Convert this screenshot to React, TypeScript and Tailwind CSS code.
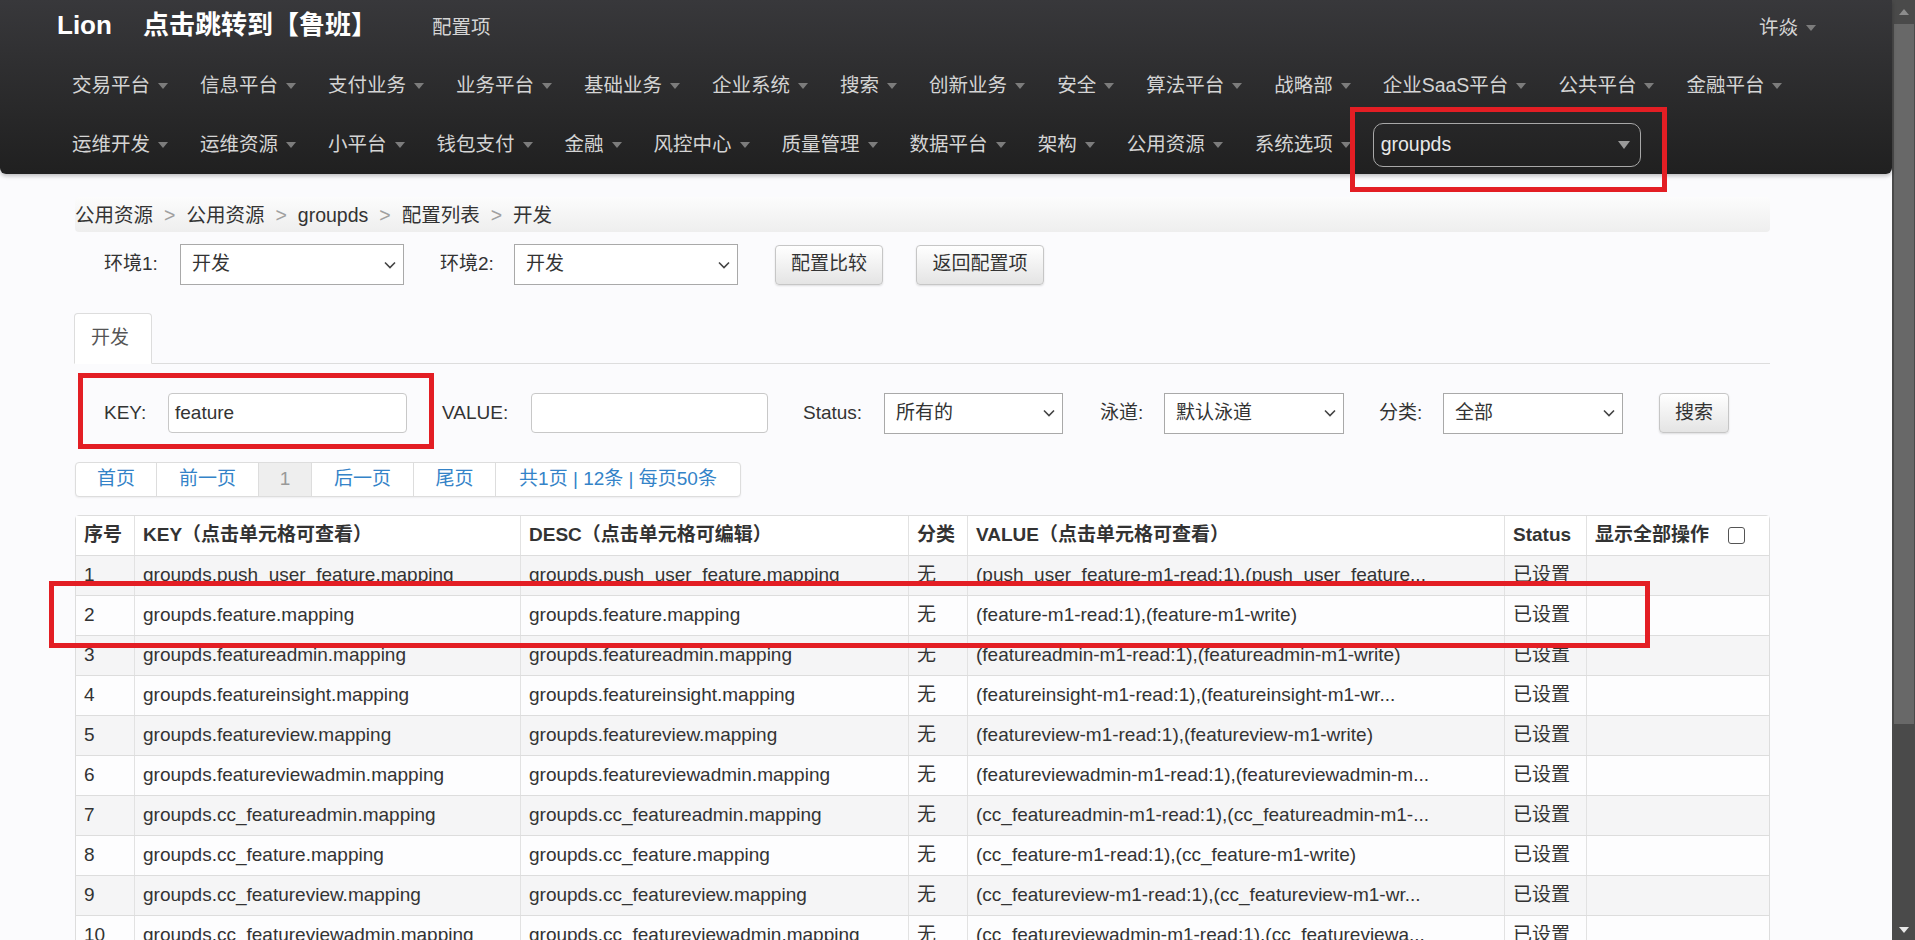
import React from "react";

const FONT = "font-['Liberation_Sans','Noto_Sans_CJK_SC',sans-serif]";

function NavCaret() {
  return (
    <span className="ml-[8px] inline-block h-0 w-0 border-l-[5px] border-r-[5px] border-t-[6px] border-l-transparent border-r-transparent border-t-[#7c7c7c]" />
  );
}

function NavItem({ label }: { label: string }) {
  return (
    <div className="flex items-center whitespace-nowrap px-[16px] text-[19.5px] text-[#d4d4d4]">
      {label}
      <NavCaret />
    </div>
  );
}

function Chevron() {
  return (
    <svg width="12" height="8" viewBox="0 0 12 8" className="shrink-0">
      <polyline points="1,1.5 6,6.5 11,1.5" fill="none" stroke="#444" strokeWidth="1.6" />
    </svg>
  );
}

function FakeSelect({ value, w }: { value: string; w: string }) {
  return (
    <div className={`flex h-[41px] items-center justify-between border border-[#a9a9a9] bg-white pl-[11px] pr-[7px] text-[19px] text-[#333] ${w}`}>
      <span>{value}</span>
      <Chevron />
    </div>
  );
}

function Btn({ label, w }: { label: string; w: string }) {
  return (
    <div className={`flex h-[40px] items-center justify-center rounded-[4px] border border-[#c6c6c6] bg-gradient-to-b from-white to-[#e4e4e4] text-[19px] text-[#333] shadow-[0_1px_2px_rgba(0,0,0,0.12)] ${w}`}>
      {label}
    </div>
  );
}

const row2 = ["交易平台", "信息平台", "支付业务", "业务平台", "基础业务", "企业系统", "搜索", "创新业务", "安全", "算法平台", "战略部", "企业SaaS平台", "公共平台", "金融平台"];
const row3 = ["运维开发", "运维资源", "小平台", "钱包支付", "金融", "风控中心", "质量管理", "数据平台", "架构", "公用资源", "系统选项"];

const rows: [string, string, string][] = [
  ["1", "groupds.push_user_feature.mapping", "(push_user_feature-m1-read:1),(push_user_feature..."],
  ["2", "groupds.feature.mapping", "(feature-m1-read:1),(feature-m1-write)"],
  ["3", "groupds.featureadmin.mapping", "(featureadmin-m1-read:1),(featureadmin-m1-write)"],
  ["4", "groupds.featureinsight.mapping", "(featureinsight-m1-read:1),(featureinsight-m1-wr..."],
  ["5", "groupds.featureview.mapping", "(featureview-m1-read:1),(featureview-m1-write)"],
  ["6", "groupds.featureviewadmin.mapping", "(featureviewadmin-m1-read:1),(featureviewadmin-m..."],
  ["7", "groupds.cc_featureadmin.mapping", "(cc_featureadmin-m1-read:1),(cc_featureadmin-m1-..."],
  ["8", "groupds.cc_feature.mapping", "(cc_feature-m1-read:1),(cc_feature-m1-write)"],
  ["9", "groupds.cc_featureview.mapping", "(cc_featureview-m1-read:1),(cc_featureview-m1-wr..."],
  ["10", "groupds.cc_featureviewadmin.mapping", "(cc_featureviewadmin-m1-read:1),(cc_featureviewa..."],
];

const GRID = "grid grid-cols-[58px_386px_388px_59px_537px_82px_183px]";
const CELL = "flex items-center overflow-hidden whitespace-nowrap px-[8px]";
const CELLB = "border-l border-[#e2e2e2]";

export default function App() {
  return (
    <div className={`flex h-[940px] w-[1915px] overflow-hidden bg-[#fbfbfd] ${FONT}`}>
      <div className="relative h-[940px] w-[1892px] shrink-0">
        {/* Navbar */}
        <div className="flex h-[174px] flex-col rounded-b-[6px] bg-gradient-to-b from-[#38383b] to-[#202020] shadow-[0_2px_4px_rgba(0,0,0,0.25)]">
          <div className="flex h-[50px] items-center pl-[57px] pr-[76px]">
            <span className="text-[26px] font-bold text-white">Lion</span>
            <span className="ml-[31px] text-[26px] font-bold text-white">点击跳转到【鲁班】</span>
            <span className="ml-[55px] mt-[5px] text-[19.5px] text-[#d4d4d4]">配置项</span>
            <div className="flex-1" />
            <span className="mt-[5px] flex items-center text-[19.5px] text-[#d4d4d4]">
              许焱
              <NavCaret />
            </span>
          </div>
          <div className="flex h-[72px] items-center pl-[56px]">
            {row2.map((l) => (
              <NavItem key={l} label={l} />
            ))}
          </div>
          <div className="flex h-[46px] items-center pl-[56px]">
            {row3.map((l) => (
              <NavItem key={l} label={l} />
            ))}
            <div className="ml-[6px] flex h-[44px] w-[268px] items-center justify-between rounded-[10px] border border-[#a8a8a8] pl-[7px] pr-[10px] text-[19.5px] text-[#e8e8e8]">
              <span>groupds</span>
              <span className="inline-block h-0 w-0 border-l-[6px] border-r-[6px] border-t-[8px] border-l-transparent border-r-transparent border-t-[#9a9a9a]" />
            </div>
          </div>
        </div>

        {/* Main */}
        <div className="ml-[75px] w-[1695px] text-[#333]">
          {/* Breadcrumb */}
          <div className="mt-[23px] flex h-[35px] items-center rounded-[4px] bg-gradient-to-b from-[#fcfcfc] to-[#eeeeee] pt-[3px] text-[19.5px]">
            <span>公用资源</span>
            <span className="mx-[11px] text-[#a0a0a0]">&gt;</span>
            <span>公用资源</span>
            <span className="mx-[11px] text-[#a0a0a0]">&gt;</span>
            <span>groupds</span>
            <span className="mx-[11px] text-[#a0a0a0]">&gt;</span>
            <span>配置列表</span>
            <span className="mx-[11px] text-[#a0a0a0]">&gt;</span>
            <span>开发</span>
          </div>

          {/* Env row */}
          <div className="mt-[12px] flex h-[41px] items-center text-[19px]">
            <span className="ml-[29px] w-[76px]">环境1:</span>
            <FakeSelect value="开发" w="w-[224px]" />
            <span className="ml-[36px] w-[74px]">环境2:</span>
            <FakeSelect value="开发" w="w-[224px]" />
            <div className="ml-[37px]">
              <Btn label="配置比较" w="w-[108px]" />
            </div>
            <div className="ml-[33px]">
              <Btn label="返回配置项" w="w-[128px]" />
            </div>
          </div>

          {/* Tabs */}
          <div className="mt-[28px] flex h-[51px] border-b border-[#dddddd]">
            <div className="-mb-px -ml-[1px] flex h-[51px] w-[78px] items-center rounded-t-[4px] border border-[#dddddd] border-b-transparent bg-white pl-[16px] text-[19px] text-[#555]">
              开发
            </div>
          </div>

          {/* Filter row */}
          <div className="mt-[29px] flex h-[40px] items-center text-[19px]">
            <span className="ml-[29px] w-[64px]">KEY:</span>
            <div className="flex h-[40px] w-[239px] items-center rounded-[4px] border border-[#c8c8c8] bg-white pl-[6px]">feature</div>
            <span className="ml-[35px] w-[89px]">VALUE:</span>
            <div className="h-[40px] w-[237px] rounded-[4px] border border-[#c8c8c8] bg-white" />
            <span className="ml-[35px] w-[81px]">Status:</span>
            <FakeSelect value="所有的" w="w-[179px]" />
            <span className="ml-[37px] w-[64px]">泳道:</span>
            <FakeSelect value="默认泳道" w="w-[180px]" />
            <span className="ml-[35px] w-[64px]">分类:</span>
            <FakeSelect value="全部" w="w-[180px]" />
            <div className="ml-[36px]">
              <Btn label="搜索" w="w-[70px]" />
            </div>
          </div>

          {/* Pagination */}
          <div className="mt-[29px] flex h-[35px] w-fit rounded-[4px] border border-[#dddddd] bg-white text-[19px] text-[#3483c8] shadow-[0_1px_2px_rgba(0,0,0,0.06)]">
            <div className="flex w-[80px] items-center justify-center">首页</div>
            <div className="flex w-[102px] items-center justify-center border-l border-[#dddddd]">前一页</div>
            <div className="flex w-[53px] items-center justify-center border-l border-[#dddddd] bg-[#eeeeee] text-[#999]">1</div>
            <div className="flex w-[102px] items-center justify-center border-l border-[#dddddd]">后一页</div>
            <div className="flex w-[82px] items-center justify-center border-l border-[#dddddd]">尾页</div>
            <div className="flex w-[245px] items-center justify-center border-l border-[#dddddd]">共1页 | 12条 | 每页50条</div>
          </div>

          {/* Table */}
          <div className="mt-[18px] rounded-t-[4px] border border-[#dddddd] text-[19px]">
            <div className={`${GRID} h-[40px] border-b border-[#dddddd] bg-white font-bold`}>
              <div className={CELL}>序号</div>
              <div className={`${CELL} ${CELLB}`}>KEY（点击单元格可查看）</div>
              <div className={`${CELL} ${CELLB}`}>DESC（点击单元格可编辑）</div>
              <div className={`${CELL} ${CELLB}`}>分类</div>
              <div className={`${CELL} ${CELLB}`}>VALUE（点击单元格可查看）</div>
              <div className={`${CELL} ${CELLB}`}>Status</div>
              <div className={`${CELL} ${CELLB}`}>
                显示全部操作
                <span className="ml-[19px] inline-block h-[17px] w-[17px] rounded-[3px] border border-[#555] bg-white" />
              </div>
            </div>
            {rows.map(([n, k, v], i) => (
              <div key={n} className={`${GRID} h-[40px] border-b border-[#dddddd] ${i % 2 === 0 ? "bg-[#f5f5f6]" : "bg-[#fdfdfe]"}`}>
                <div className={CELL}>{n}</div>
                <div className={`${CELL} ${CELLB}`}>{k}</div>
                <div className={`${CELL} ${CELLB}`}>{k}</div>
                <div className={`${CELL} ${CELLB}`}>无</div>
                <div className={`${CELL} ${CELLB}`}>{v}</div>
                <div className={`${CELL} ${CELLB}`}>已设置</div>
                <div className={`${CELL} ${CELLB}`} />
              </div>
            ))}
          </div>
        </div>

        {/* Red annotation boxes */}
        <div className="absolute left-[1350px] top-[107px] h-[85px] w-[317px] border-[5px] border-[#e31e24]" />
        <div className="absolute left-[78px] top-[373px] h-[76px] w-[356px] border-[5px] border-[#e31e24]" />
        <div className="absolute left-[49px] top-[581px] h-[67px] w-[1601px] border-[5px] border-[#e31e24]" />
      </div>

      {/* Scrollbar */}
      <div className="flex h-[940px] w-[23px] shrink-0 flex-col bg-[#4a4a4a]">
        <div className="flex h-[24px] items-center justify-center">
          <span className="inline-block h-0 w-0 border-b-[6px] border-l-[5px] border-r-[5px] border-b-[#8c8c8c] border-l-transparent border-r-transparent" />
        </div>
        <div className="ml-[2px] h-[700px] w-[20px] bg-[#686868]" />
        <div className="flex-1" />
        <div className="flex h-[24px] items-center justify-center pt-[4px]">
          <span className="inline-block h-0 w-0 border-l-[5px] border-r-[5px] border-t-[6px] border-l-transparent border-r-transparent border-t-[#e8e8e8]" />
        </div>
      </div>
    </div>
  );
}
